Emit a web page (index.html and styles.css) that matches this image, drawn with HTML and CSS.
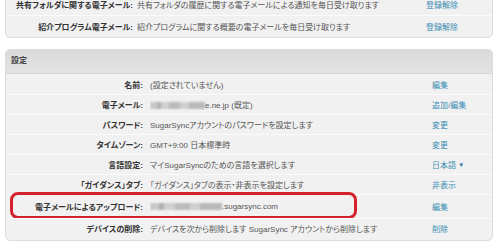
FILE: index.html
```html
<!DOCTYPE html>
<html lang="ja">
<head>
<meta charset="utf-8">
<link rel="stylesheet" href="styles.css">
</head>
<body>
<div class="panel panel-top">
  <div class="row row-top">
    <div class="label">共有フォルダに関する電子メール:</div>
    <div class="value">共有フォルダの履歴に関する電子メールによる通知を毎日受け取ります</div>
    <div class="action"><a>登録解除</a></div>
  </div>
  <div class="row row-top">
    <div class="label">紹介プログラム電子メール:</div>
    <div class="value">紹介プログラムに関する概要の電子メールを毎日受け取ります</div>
    <div class="action"><a>登録解除</a></div>
  </div>
</div>

<div class="panel panel-settings">
  <div class="header">設定</div>
  <div class="row">
    <div class="label">名前:</div>
    <div class="value">(設定されていません)</div>
    <div class="action"><a>編集</a></div>
  </div>
  <div class="row">
    <div class="label">電子メール:</div>
    <div class="value"><span class="blur blur-a"></span>e.ne.jp (既定)</div>
    <div class="action"><a>追加/編集</a></div>
  </div>
  <div class="row">
    <div class="label">パスワード:</div>
    <div class="value">SugarSyncアカウントのパスワードを設定します</div>
    <div class="action"><a>変更</a></div>
  </div>
  <div class="row">
    <div class="label">タイムゾーン:</div>
    <div class="value">GMT+9:00 日本標準時</div>
    <div class="action"><a>変更</a></div>
  </div>
  <div class="row">
    <div class="label">言語設定:</div>
    <div class="value">マイSugarSyncのための言語を選択します</div>
    <div class="action"><a>日本語 <span class="caret">▼</span></a></div>
  </div>
  <div class="row">
    <div class="label">「ガイダンス」タブ:</div>
    <div class="value">「ガイダンス」タブの表示・非表示を設定します</div>
    <div class="action"><a>非表示</a></div>
  </div>
  <div class="row row-upload">
    <div class="label">電子メールによるアップロード:</div>
    <div class="value"><span class="blur blur-b"></span>.sugarsync.com</div>
    <div class="action"><a>編集</a></div>
    <div class="highlight"></div>
  </div>
  <div class="row">
    <div class="label">デバイスの削除:</div>
    <div class="value">デバイスを次から削除します SugarSync アカウントから削除します</div>
    <div class="action"><a>削除</a></div>
  </div>
</div>
</body>
</html>
```
FILE: styles.css
```css
* { box-sizing: border-box; }
body {
  margin: 0;
  background: #fff;
  font-family: "Liberation Sans", "Noto Sans CJK JP", sans-serif;
  font-size: 8px;
  font-feature-settings: "palt";
  color: #555;
  overflow: hidden;
  height: 249px;
}
.panel {
  margin: 0 7px 0 5px;
  background: #f1f1f1;
  border: 1px solid #dcdcdc;
  border-radius: 5px;
  position: relative;
}
.panel-top {
  margin-top: -7px;
  padding-bottom: 1px;
}
.panel-settings {
  margin-top: 11px;
  padding-bottom: 2px;
}
.header {
  height: 24px;
  line-height: 21px;
  padding-left: 5px;
  background: linear-gradient(#dadada, #e3e3e3);
  border-radius: 4px 4px 0 0;
  color: #444;
  font-weight: bold;
  border-bottom: 1px solid #d6d6d6;
}
.row {
  display: grid;
  grid-template-columns: 137px 1fr 60px;
  column-gap: 7px;
  height: 20px;
  align-items: center;
  border-top: 1px solid #fbfbfb;
  position: relative;
}
.panel-settings .header + .row { border-top: none; }
.row-top {
  grid-template-columns: 127px 1fr 66px;
  column-gap: 4px;
  height: 21px;
}
.row-top:first-child { border-top: none; }
.row-upload { height: 24px; }
.label {
  text-align: right;
  font-weight: bold;
  color: #333;
  white-space: nowrap;
}
.value {
  white-space: nowrap;
  overflow: hidden;
}
.action a {
  color: #3a8db3;
}
.caret {
  font-size: 6px;
  vertical-align: 1px;
  color: #2d6f9a;
}
.blur {
  display: inline-block;
  height: 7px;
  vertical-align: -1px;
  filter: blur(1px);
  background: linear-gradient(90deg, #c8c8c8 0 12%, #b0b0b0 12% 20%, #d0d0d0 20% 35%, #bbbbbb 35% 55%, #cfcfcf 55% 70%, #b8b8b8 70% 100%);
}
.blur-a { width: 55px; }
.blur-b { width: 72px; }
.highlight {
  position: absolute;
  left: 4px;
  top: -3px;
  width: 347px;
  height: 27px;
  border: 3px solid #d3212d;
  border-radius: 8px;
  pointer-events: none;
}
```
